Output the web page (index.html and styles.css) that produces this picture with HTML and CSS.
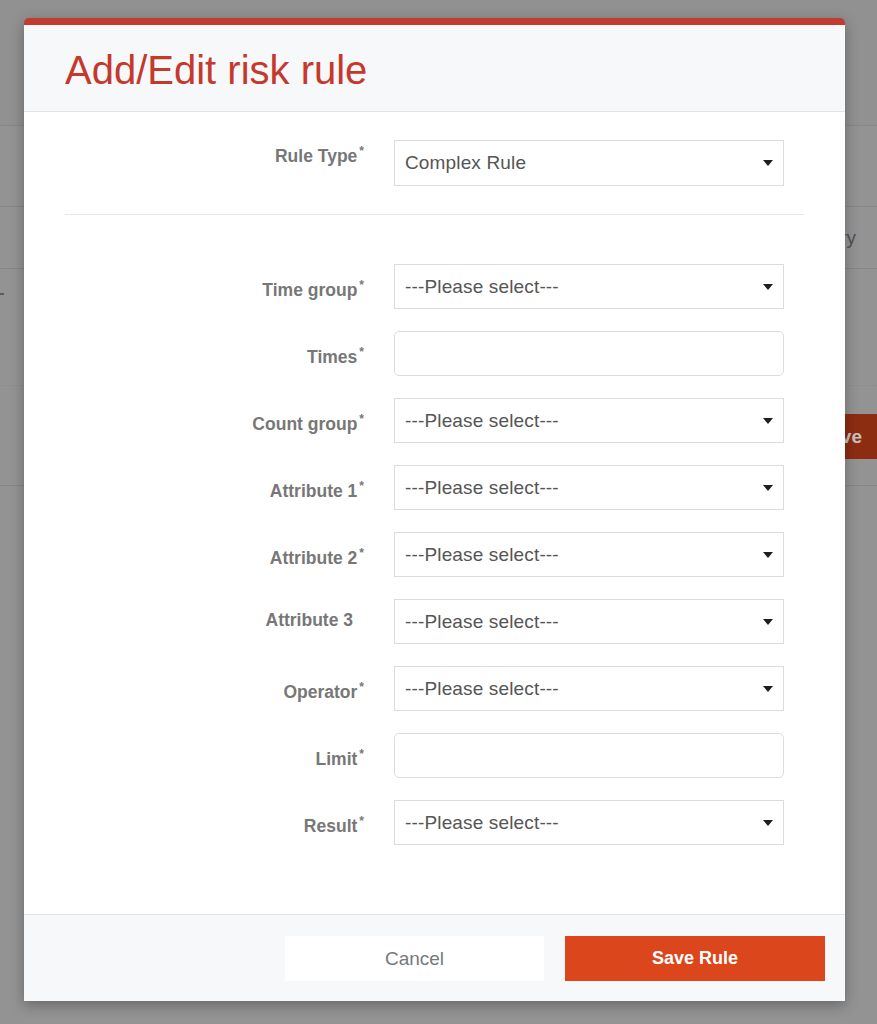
FILE: index.html
```html
<!DOCTYPE html>
<html lang="en">
<head>
<meta charset="utf-8">
<title>Add/Edit risk rule</title>
<link rel="stylesheet" href="styles.css">
</head>
<body>
<div class="page">
  <div class="bg-top"></div>
  <div class="bg-row bg-r1"></div>
  <div class="bg-row bg-r2"><span class="bg-th">Category</span></div>
  <div class="bg-row bg-r3"><span class="bg-dash"></span></div>
  <div class="bg-row bg-r4"><span class="bg-btn">ve</span></div>
</div>

<div class="modal">
  <div class="modal-header">
    <h1 class="modal-title">Add/Edit risk rule</h1>
  </div>
  <div class="modal-body">
    <div class="form-row row-type">
      <label class="label">Rule Type<sup>*</sup></label>
      <div class="select"><span>Complex Rule</span><svg class="caret" width="10" height="6" viewBox="0 0 10 6"><path d="M0 0H10L5 6Z"/></svg></div>
    </div>
    <div class="divider"></div>
    <div class="fields">
      <div class="form-row">
        <label class="label">Time group<sup>*</sup></label>
        <div class="select"><span>---Please select---</span><svg class="caret" width="10" height="6" viewBox="0 0 10 6"><path d="M0 0H10L5 6Z"/></svg></div>
      </div>
      <div class="form-row">
        <label class="label">Times<sup>*</sup></label>
        <input class="input" type="text">
      </div>
      <div class="form-row">
        <label class="label">Count group<sup>*</sup></label>
        <div class="select"><span>---Please select---</span><svg class="caret" width="10" height="6" viewBox="0 0 10 6"><path d="M0 0H10L5 6Z"/></svg></div>
      </div>
      <div class="form-row">
        <label class="label">Attribute 1<sup>*</sup></label>
        <div class="select"><span>---Please select---</span><svg class="caret" width="10" height="6" viewBox="0 0 10 6"><path d="M0 0H10L5 6Z"/></svg></div>
      </div>
      <div class="form-row">
        <label class="label">Attribute 2<sup>*</sup></label>
        <div class="select"><span>---Please select---</span><svg class="caret" width="10" height="6" viewBox="0 0 10 6"><path d="M0 0H10L5 6Z"/></svg></div>
      </div>
      <div class="form-row">
        <label class="label label-plain">Attribute 3</label>
        <div class="select"><span>---Please select---</span><svg class="caret" width="10" height="6" viewBox="0 0 10 6"><path d="M0 0H10L5 6Z"/></svg></div>
      </div>
      <div class="form-row">
        <label class="label">Operator<sup>*</sup></label>
        <div class="select"><span>---Please select---</span><svg class="caret" width="10" height="6" viewBox="0 0 10 6"><path d="M0 0H10L5 6Z"/></svg></div>
      </div>
      <div class="form-row">
        <label class="label">Limit<sup>*</sup></label>
        <input class="input" type="text">
      </div>
      <div class="form-row">
        <label class="label">Result<sup>*</sup></label>
        <div class="select"><span>---Please select---</span><svg class="caret" width="10" height="6" viewBox="0 0 10 6"><path d="M0 0H10L5 6Z"/></svg></div>
      </div>
    </div>
  </div>
  <div class="modal-footer">
    <button class="btn btn-cancel" type="button">Cancel</button>
    <button class="btn btn-save" type="button">Save Rule</button>
  </div>
</div>
</body>
</html>
```

FILE: styles.css
```css
html, body {
  margin: 0;
  padding: 0;
}
body {
  background: #939393;
  width: 877px;
  height: 1024px;
  overflow: hidden;
  position: relative;
  font-family: "Liberation Sans", Arial, Helvetica, sans-serif;
}

/* dimmed page behind the dialog */
.page {
  display: flex;
  flex-direction: column;
}
.bg-top {
  height: 125px;
  background: #919191;
  border-bottom: 1px solid #878787;
}
.bg-row {
  border-bottom: 1px solid #878787;
  display: flex;
  align-items: center;
  justify-content: flex-end;
  position: relative;
}
.bg-r1 { height: 80px; }
.bg-r2 { height: 61px; }
.bg-r3 {
  height: 116px;
  border-bottom: 1px dotted #8a8a8a;
  justify-content: flex-start;
  align-items: flex-start;
}
.bg-r4 {
  height: 99px;
  align-items: flex-start;
}
.bg-th {
  font-size: 19px;
  color: #4f5256;
  margin-right: 21px;
}
.bg-dash {
  display: block;
  width: 4px;
  height: 2px;
  background: #5a5d62;
  margin-top: 24px;
}
.bg-btn {
  display: block;
  margin-top: 28px;
  width: 47px;
  box-sizing: border-box;
  padding-right: 15px;
  height: 45px;
  line-height: 45px;
  background: #8c2d11;
  color: #c9c2bf;
  font-size: 19px;
  font-weight: bold;
  text-align: right;
}

/* dialog */
.modal {
  position: absolute;
  top: 18px;
  left: 24px;
  width: 821px;
  background: #fff;
  border-top: 7px solid #c13b30;
  border-radius: 5px 5px 0 0;
  box-shadow: 0 4px 14px rgba(0, 0, 0, 0.3);
}
.modal-header {
  height: 87px;
  box-sizing: border-box;
  background: #f7f8fa;
  border-bottom: 1px solid #e2e4e7;
  padding: 21px 41px 0;
}
.modal-title {
  margin: 0;
  font-size: 40px;
  line-height: 48px;
  font-weight: normal;
  color: #c5392d;
}

.modal-body {
  padding: 28px 61px 69px 41px;
}
.form-row {
  display: grid;
  grid-template-columns: 1fr 390px;
  column-gap: 30px;
  align-items: start;
}
.fields {
  display: flex;
  flex-direction: column;
  gap: 22px;
}
.label {
  text-align: right;
  font-size: 17.5px;
  line-height: 20px;
  font-weight: bold;
  color: #777;
  padding-top: 16px;
  white-space: nowrap;
}
.label sup {
  font-size: 12px;
  line-height: 0;
  vertical-align: 7px;
  margin-left: 2px;
}
.label-plain {
  padding-top: 11px;
  padding-right: 11px;
}
.row-type .label {
  padding-top: 6px;
}
.divider {
  height: 1px;
  background: #e8e9eb;
  margin: 28px -20px 49px 0;
}

.select {
  height: 45px;
  box-sizing: border-box;
  border: 1px solid #dcdcdc;
  display: flex;
  align-items: center;
  justify-content: space-between;
  padding: 0 10px 0 10px;
  font-size: 19px;
  letter-spacing: 0.15px;
  color: #555;
  background: #fff;
}
.row-type .select {
  height: 46px;
}
.caret {
  display: block;
  fill: #1e1e1e;
}
.input {
  display: block;
  width: 100%;
  height: 45px;
  box-sizing: border-box;
  border: 1px solid #dcdcdc;
  border-radius: 5px;
  margin: 0;
  padding: 0 10px;
  font-size: 19px;
  background: #fff;
}

.modal-footer {
  background: #f7f8fa;
  border-top: 1px solid #e2e4e7;
  display: flex;
  justify-content: flex-end;
  gap: 21px;
  padding: 21px 20px 20px;
}
.btn {
  width: 260px;
  height: 45px;
  border: none;
  margin: 0;
  padding: 0;
  font-family: "Liberation Sans", Arial, Helvetica, sans-serif;
  cursor: pointer;
}
.btn-cancel {
  width: 259px;
  background: #fff;
  color: #75797e;
  font-size: 19px;
}
.btn-save {
  background: #dc461d;
  color: #fff;
  font-size: 18px;
  font-weight: bold;
}
```
